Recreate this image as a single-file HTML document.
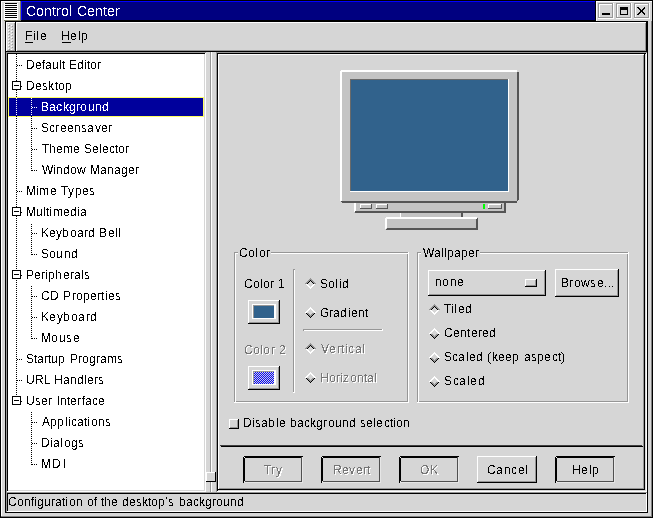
<!DOCTYPE html>
<html><head><meta charset="utf-8"><style>
html,body{margin:0;padding:0;width:653px;height:518px;overflow:hidden;background:#d6d6d6}
div{position:absolute}
.t{font-family:"Liberation Sans",sans-serif;white-space:nowrap;filter:url(#c)}
</style></head><body>
<svg width="0" height="0" style="position:absolute"><filter id="c"><feComponentTransfer><feFuncA type="discrete" tableValues="0 1"/></feComponentTransfer></filter></svg>
<div style="left:0px;top:0px;width:653px;height:518px;background:#d6d6d6;"></div>
<div style="left:0px;top:0px;width:653px;height:518px;background:transparent;box-sizing:border-box;border:1px solid #000"></div>
<div style="left:1px;top:1px;width:651px;height:1px;background:#ffffff;"></div>
<div style="left:1px;top:1px;width:1px;height:516px;background:#ffffff;"></div>
<div style="left:1px;top:516px;width:651px;height:1px;background:#808080;"></div>
<div style="left:651px;top:1px;width:1px;height:516px;background:#808080;"></div>
<div style="left:5px;top:21px;width:643px;height:492px;background:transparent;box-sizing:border-box;border:1px solid #000"></div>
<div style="left:2px;top:2px;width:18px;height:18px;background:#d6d6d6;"></div>
<div style="left:4px;top:3px;width:14px;height:17px;background:#ffffff;"></div>
<div style="left:5px;top:3px;width:12px;height:1px;background:#000000;"></div>
<div style="left:5px;top:5px;width:12px;height:1px;background:#000000;"></div>
<div style="left:5px;top:7px;width:12px;height:1px;background:#000000;"></div>
<div style="left:5px;top:9px;width:12px;height:1px;background:#000000;"></div>
<div style="left:5px;top:11px;width:12px;height:1px;background:#000000;"></div>
<div style="left:5px;top:13px;width:12px;height:1px;background:#000000;"></div>
<div style="left:5px;top:15px;width:12px;height:1px;background:#000000;"></div>
<div style="left:5px;top:17px;width:12px;height:1px;background:#000000;"></div>
<div style="left:20px;top:1px;width:1px;height:20px;background:#7c7c64;"></div>
<div style="left:4px;top:20px;width:17px;height:1px;background:#7c7c64;"></div>
<div style="left:21px;top:1px;width:574px;height:19px;background:#000080;"></div>
<div style="left:21px;top:1px;width:574px;height:1px;background:#0000ff;"></div>
<div style="left:21px;top:1px;width:1px;height:19px;background:#0000ff;"></div>
<div style="left:595px;top:1px;width:1px;height:20px;background:#000000;"></div>
<div style="left:21px;top:20px;width:575px;height:1px;background:#000000;"></div>
<div class="t" style="left:26px;top:4px;font-size:14px;line-height:14px;color:#ffffff;"><div style="left:0px;top:0">C</div><div style="left:10px;top:0">o</div><div style="left:18px;top:0">n</div><div style="left:26px;top:0">t</div><div style="left:30px;top:0">r</div><div style="left:35px;top:0">o</div><div style="left:43px;top:0">l</div><div style="left:51px;top:0">C</div><div style="left:61px;top:0">e</div><div style="left:69px;top:0">n</div><div style="left:77px;top:0">t</div><div style="left:81px;top:0">e</div><div style="left:89px;top:0">r</div></div>
<div style="left:596px;top:1px;width:56px;height:20px;background:#d6d6d6;"></div>
<div style="left:596px;top:1px;width:56px;height:1px;background:#ffffff;"></div>
<div style="left:596px;top:1px;width:1px;height:20px;background:#ffffff;"></div>
<div style="left:598px;top:3px;width:16px;height:16px;background:#d6d6d6;"></div>
<div style="left:598px;top:3px;width:16px;height:1px;background:#969696;"></div>
<div style="left:598px;top:3px;width:1px;height:16px;background:#969696;"></div>
<div style="left:598px;top:18px;width:16px;height:1px;background:#ffffff;"></div>
<div style="left:613px;top:3px;width:1px;height:16px;background:#ffffff;"></div>
<div style="left:599px;top:4px;width:14px;height:1px;background:#ffffff;"></div>
<div style="left:599px;top:4px;width:1px;height:14px;background:#ffffff;"></div>
<div style="left:599px;top:17px;width:14px;height:1px;background:#969696;"></div>
<div style="left:612px;top:4px;width:1px;height:14px;background:#969696;"></div>
<div style="left:616px;top:3px;width:16px;height:16px;background:#d6d6d6;"></div>
<div style="left:616px;top:3px;width:16px;height:1px;background:#969696;"></div>
<div style="left:616px;top:3px;width:1px;height:16px;background:#969696;"></div>
<div style="left:616px;top:18px;width:16px;height:1px;background:#ffffff;"></div>
<div style="left:631px;top:3px;width:1px;height:16px;background:#ffffff;"></div>
<div style="left:617px;top:4px;width:14px;height:1px;background:#ffffff;"></div>
<div style="left:617px;top:4px;width:1px;height:14px;background:#ffffff;"></div>
<div style="left:617px;top:17px;width:14px;height:1px;background:#969696;"></div>
<div style="left:630px;top:4px;width:1px;height:14px;background:#969696;"></div>
<div style="left:634px;top:3px;width:16px;height:16px;background:#d6d6d6;"></div>
<div style="left:634px;top:3px;width:16px;height:1px;background:#969696;"></div>
<div style="left:634px;top:3px;width:1px;height:16px;background:#969696;"></div>
<div style="left:634px;top:18px;width:16px;height:1px;background:#ffffff;"></div>
<div style="left:649px;top:3px;width:1px;height:16px;background:#ffffff;"></div>
<div style="left:635px;top:4px;width:14px;height:1px;background:#ffffff;"></div>
<div style="left:635px;top:4px;width:1px;height:14px;background:#ffffff;"></div>
<div style="left:635px;top:17px;width:14px;height:1px;background:#969696;"></div>
<div style="left:648px;top:4px;width:1px;height:14px;background:#969696;"></div>
<div style="left:602px;top:13px;width:8px;height:2px;background:#000000;"></div>
<div style="left:620px;top:7px;width:8px;height:8px;background:transparent;box-sizing:border-box;border:1px solid #000;border-top-width:3px"></div>
<div style="left:637px;top:7px;width:2px;height:1px;background:#000000;"></div>
<div style="left:637px;top:14px;width:2px;height:1px;background:#000000;"></div>
<div style="left:638px;top:8px;width:2px;height:1px;background:#000000;"></div>
<div style="left:638px;top:13px;width:2px;height:1px;background:#000000;"></div>
<div style="left:639px;top:9px;width:2px;height:1px;background:#000000;"></div>
<div style="left:639px;top:12px;width:2px;height:1px;background:#000000;"></div>
<div style="left:640px;top:10px;width:2px;height:1px;background:#000000;"></div>
<div style="left:640px;top:11px;width:2px;height:1px;background:#000000;"></div>
<div style="left:641px;top:11px;width:2px;height:1px;background:#000000;"></div>
<div style="left:641px;top:10px;width:2px;height:1px;background:#000000;"></div>
<div style="left:642px;top:12px;width:2px;height:1px;background:#000000;"></div>
<div style="left:642px;top:9px;width:2px;height:1px;background:#000000;"></div>
<div style="left:643px;top:13px;width:2px;height:1px;background:#000000;"></div>
<div style="left:643px;top:8px;width:2px;height:1px;background:#000000;"></div>
<div style="left:644px;top:14px;width:1px;height:1px;background:#000000;"></div>
<div style="left:644px;top:7px;width:1px;height:1px;background:#000000;"></div>
<div style="left:6px;top:22px;width:10px;height:1px;background:#ffffff;"></div>
<div style="left:6px;top:22px;width:1px;height:30px;background:#ffffff;"></div>
<div style="left:7px;top:50px;width:8px;height:1px;background:#969696;"></div>
<div style="left:14px;top:23px;width:1px;height:28px;background:#969696;"></div>
<div style="left:6px;top:51px;width:10px;height:1px;background:#000000;"></div>
<div style="left:15px;top:22px;width:1px;height:30px;background:#000000;"></div>
<div style="left:8px;top:24px;width:1px;height:1px;background:#ffffff;"></div>
<div style="left:9px;top:25px;width:1px;height:1px;background:#969696;"></div>
<div style="left:11px;top:25px;width:1px;height:1px;background:#ffffff;"></div>
<div style="left:12px;top:26px;width:1px;height:1px;background:#969696;"></div>
<div style="left:8px;top:27px;width:1px;height:1px;background:#ffffff;"></div>
<div style="left:9px;top:28px;width:1px;height:1px;background:#969696;"></div>
<div style="left:11px;top:28px;width:1px;height:1px;background:#ffffff;"></div>
<div style="left:12px;top:29px;width:1px;height:1px;background:#969696;"></div>
<div style="left:8px;top:30px;width:1px;height:1px;background:#ffffff;"></div>
<div style="left:9px;top:31px;width:1px;height:1px;background:#969696;"></div>
<div style="left:11px;top:31px;width:1px;height:1px;background:#ffffff;"></div>
<div style="left:12px;top:32px;width:1px;height:1px;background:#969696;"></div>
<div style="left:8px;top:33px;width:1px;height:1px;background:#ffffff;"></div>
<div style="left:9px;top:34px;width:1px;height:1px;background:#969696;"></div>
<div style="left:11px;top:34px;width:1px;height:1px;background:#ffffff;"></div>
<div style="left:12px;top:35px;width:1px;height:1px;background:#969696;"></div>
<div style="left:8px;top:36px;width:1px;height:1px;background:#ffffff;"></div>
<div style="left:9px;top:37px;width:1px;height:1px;background:#969696;"></div>
<div style="left:11px;top:37px;width:1px;height:1px;background:#ffffff;"></div>
<div style="left:12px;top:38px;width:1px;height:1px;background:#969696;"></div>
<div style="left:8px;top:39px;width:1px;height:1px;background:#ffffff;"></div>
<div style="left:9px;top:40px;width:1px;height:1px;background:#969696;"></div>
<div style="left:11px;top:40px;width:1px;height:1px;background:#ffffff;"></div>
<div style="left:12px;top:41px;width:1px;height:1px;background:#969696;"></div>
<div style="left:8px;top:42px;width:1px;height:1px;background:#ffffff;"></div>
<div style="left:9px;top:43px;width:1px;height:1px;background:#969696;"></div>
<div style="left:11px;top:43px;width:1px;height:1px;background:#ffffff;"></div>
<div style="left:12px;top:44px;width:1px;height:1px;background:#969696;"></div>
<div style="left:8px;top:45px;width:1px;height:1px;background:#ffffff;"></div>
<div style="left:9px;top:46px;width:1px;height:1px;background:#969696;"></div>
<div style="left:11px;top:46px;width:1px;height:1px;background:#ffffff;"></div>
<div style="left:12px;top:47px;width:1px;height:1px;background:#969696;"></div>
<div style="left:8px;top:48px;width:1px;height:1px;background:#ffffff;"></div>
<div style="left:9px;top:49px;width:1px;height:1px;background:#969696;"></div>
<div style="left:11px;top:49px;width:1px;height:1px;background:#ffffff;"></div>
<div style="left:12px;top:50px;width:1px;height:1px;background:#969696;"></div>
<div style="left:16px;top:22px;width:631px;height:1px;background:#ffffff;"></div>
<div style="left:16px;top:22px;width:1px;height:30px;background:#ffffff;"></div>
<div style="left:17px;top:50px;width:629px;height:1px;background:#969696;"></div>
<div style="left:645px;top:23px;width:1px;height:28px;background:#969696;"></div>
<div style="left:16px;top:51px;width:631px;height:1px;background:#000000;"></div>
<div style="left:646px;top:22px;width:1px;height:30px;background:#000000;"></div>
<div class="t" style="left:25px;top:30px;font-size:12px;line-height:12px;color:#000000;"><div style="left:0px;top:0">F</div><div style="left:8px;top:0">i</div><div style="left:11px;top:0">l</div><div style="left:15px;top:0">e</div></div>
<div style="left:25px;top:42px;width:8px;height:1px;background:#000000;"></div>
<div class="t" style="left:61px;top:30px;font-size:12px;line-height:12px;color:#000000;"><div style="left:0px;top:0">H</div><div style="left:9px;top:0">e</div><div style="left:17px;top:0">l</div><div style="left:20px;top:0">p</div></div>
<div style="left:62px;top:42px;width:9px;height:1px;background:#000000;"></div>
<div style="left:6px;top:491px;width:200px;height:1px;background:#ffffff;"></div>
<div style="left:205px;top:52px;width:1px;height:440px;background:#ffffff;"></div>
<div style="left:7px;top:490px;width:198px;height:1px;background:#d6d6d6;"></div>
<div style="left:204px;top:53px;width:1px;height:438px;background:#d6d6d6;"></div>
<div style="left:6px;top:52px;width:200px;height:1px;background:#969696;"></div>
<div style="left:6px;top:52px;width:1px;height:440px;background:#969696;"></div>
<div style="left:7px;top:53px;width:198px;height:1px;background:#000000;"></div>
<div style="left:7px;top:53px;width:1px;height:438px;background:#000000;"></div>
<div style="left:8px;top:54px;width:196px;height:436px;background:#ffffff;"></div>
<div style="left:8px;top:97px;width:196px;height:20px;background:#ffff63;"></div>
<div style="left:9px;top:98px;width:194px;height:18px;background:#00009c;"></div>
<div style="left:16px;top:54px;width:1px;height:44px;background:repeating-linear-gradient(to bottom,#000000 0 1px,transparent 1px 2px);"></div>
<div style="left:16px;top:98px;width:1px;height:18px;background:repeating-linear-gradient(to bottom,#ffffff 0 1px,transparent 1px 2px);"></div>
<div style="left:16px;top:116px;width:1px;height:280px;background:repeating-linear-gradient(to bottom,#000000 0 1px,transparent 1px 2px);"></div>
<div style="left:31px;top:98px;width:1px;height:18px;background:repeating-linear-gradient(to bottom,#ffffff 0 1px,transparent 1px 2px);"></div>
<div style="left:31px;top:116px;width:1px;height:55px;background:repeating-linear-gradient(to bottom,#000000 0 1px,transparent 1px 2px);"></div>
<div style="left:31px;top:224px;width:1px;height:31px;background:repeating-linear-gradient(to bottom,#000000 0 1px,transparent 1px 2px);"></div>
<div style="left:31px;top:286px;width:1px;height:53px;background:repeating-linear-gradient(to bottom,#000000 0 1px,transparent 1px 2px);"></div>
<div style="left:31px;top:412px;width:1px;height:53px;background:repeating-linear-gradient(to bottom,#000000 0 1px,transparent 1px 2px);"></div>
<div style="left:17px;top:65px;width:5px;height:1px;background:repeating-linear-gradient(to right,#000000 0 1px,transparent 1px 2px);"></div>
<div class="t" style="left:26px;top:59px;font-size:12px;line-height:12px;color:#000000;"><div style="left:0px;top:0">D</div><div style="left:9px;top:0">e</div><div style="left:16px;top:0">f</div><div style="left:19px;top:0">a</div><div style="left:26px;top:0">u</div><div style="left:33px;top:0">l</div><div style="left:36px;top:0">t</div><div style="left:43px;top:0">E</div><div style="left:51px;top:0">d</div><div style="left:58px;top:0">i</div><div style="left:61px;top:0">t</div><div style="left:64px;top:0">o</div><div style="left:71px;top:0">r</div></div>
<div style="left:12px;top:81px;width:9px;height:9px;background:#ffffff;box-sizing:border-box;border:1px solid #000"></div>
<div style="left:14px;top:85px;width:5px;height:1px;background:#000000;"></div>
<div style="left:21px;top:86px;width:1px;height:1px;background:#000000;"></div>
<div class="t" style="left:26px;top:80px;font-size:12px;line-height:12px;color:#000000;"><div style="left:0px;top:0">D</div><div style="left:9px;top:0">e</div><div style="left:16px;top:0">s</div><div style="left:22px;top:0">k</div><div style="left:29px;top:0">t</div><div style="left:32px;top:0">o</div><div style="left:39px;top:0">p</div></div>
<div style="left:32px;top:107px;width:5px;height:1px;background:repeating-linear-gradient(to right,#ffffff 0 1px,transparent 1px 2px);"></div>
<div class="t" style="left:41px;top:101px;font-size:12px;line-height:12px;color:#ffffff;"><div style="left:0px;top:0">B</div><div style="left:8px;top:0">a</div><div style="left:15px;top:0">c</div><div style="left:22px;top:0">k</div><div style="left:28px;top:0">g</div><div style="left:35px;top:0">r</div><div style="left:39px;top:0">o</div><div style="left:47px;top:0">u</div><div style="left:54px;top:0">n</div><div style="left:61px;top:0">d</div></div>
<div style="left:32px;top:128px;width:5px;height:1px;background:repeating-linear-gradient(to right,#000000 0 1px,transparent 1px 2px);"></div>
<div class="t" style="left:41px;top:122px;font-size:12px;line-height:12px;color:#000000;"><div style="left:0px;top:0">S</div><div style="left:8px;top:0">c</div><div style="left:14px;top:0">r</div><div style="left:19px;top:0">e</div><div style="left:26px;top:0">e</div><div style="left:33px;top:0">n</div><div style="left:40px;top:0">s</div><div style="left:46px;top:0">a</div><div style="left:54px;top:0">v</div><div style="left:60px;top:0">e</div><div style="left:67px;top:0">r</div></div>
<div style="left:32px;top:149px;width:5px;height:1px;background:repeating-linear-gradient(to right,#000000 0 1px,transparent 1px 2px);"></div>
<div class="t" style="left:42px;top:143px;font-size:12px;line-height:12px;color:#000000;"><div style="left:0px;top:0">T</div><div style="left:7px;top:0">h</div><div style="left:14px;top:0">e</div><div style="left:21px;top:0">m</div><div style="left:31px;top:0">e</div><div style="left:42px;top:0">S</div><div style="left:50px;top:0">e</div><div style="left:57px;top:0">l</div><div style="left:60px;top:0">e</div><div style="left:67px;top:0">c</div><div style="left:73px;top:0">t</div><div style="left:76px;top:0">o</div><div style="left:83px;top:0">r</div></div>
<div style="left:32px;top:170px;width:5px;height:1px;background:repeating-linear-gradient(to right,#000000 0 1px,transparent 1px 2px);"></div>
<div class="t" style="left:42px;top:164px;font-size:12px;line-height:12px;color:#000000;"><div style="left:0px;top:0">W</div><div style="left:11px;top:0">i</div><div style="left:14px;top:0">n</div><div style="left:21px;top:0">d</div><div style="left:28px;top:0">o</div><div style="left:35px;top:0">w</div><div style="left:48px;top:0">M</div><div style="left:58px;top:0">a</div><div style="left:65px;top:0">n</div><div style="left:72px;top:0">a</div><div style="left:79px;top:0">g</div><div style="left:86px;top:0">e</div><div style="left:93px;top:0">r</div></div>
<div style="left:17px;top:191px;width:5px;height:1px;background:repeating-linear-gradient(to right,#000000 0 1px,transparent 1px 2px);"></div>
<div class="t" style="left:26px;top:185px;font-size:12px;line-height:12px;color:#000000;"><div style="left:0px;top:0">M</div><div style="left:10px;top:0">i</div><div style="left:13px;top:0">m</div><div style="left:24px;top:0">e</div><div style="left:35px;top:0">T</div><div style="left:42px;top:0">y</div><div style="left:49px;top:0">p</div><div style="left:56px;top:0">e</div><div style="left:63px;top:0">s</div></div>
<div style="left:12px;top:207px;width:9px;height:9px;background:#ffffff;box-sizing:border-box;border:1px solid #000"></div>
<div style="left:14px;top:211px;width:5px;height:1px;background:#000000;"></div>
<div style="left:21px;top:212px;width:1px;height:1px;background:#000000;"></div>
<div class="t" style="left:26px;top:206px;font-size:12px;line-height:12px;color:#000000;"><div style="left:0px;top:0">M</div><div style="left:10px;top:0">u</div><div style="left:17px;top:0">l</div><div style="left:20px;top:0">t</div><div style="left:23px;top:0">i</div><div style="left:27px;top:0">m</div><div style="left:37px;top:0">e</div><div style="left:44px;top:0">d</div><div style="left:51px;top:0">i</div><div style="left:54px;top:0">a</div></div>
<div style="left:32px;top:233px;width:5px;height:1px;background:repeating-linear-gradient(to right,#000000 0 1px,transparent 1px 2px);"></div>
<div class="t" style="left:41px;top:227px;font-size:12px;line-height:12px;color:#000000;"><div style="left:0px;top:0">K</div><div style="left:8px;top:0">e</div><div style="left:15px;top:0">y</div><div style="left:21px;top:0">b</div><div style="left:29px;top:0">o</div><div style="left:36px;top:0">a</div><div style="left:43px;top:0">r</div><div style="left:47px;top:0">d</div><div style="left:58px;top:0">B</div><div style="left:67px;top:0">e</div><div style="left:74px;top:0">l</div><div style="left:77px;top:0">l</div></div>
<div style="left:32px;top:254px;width:5px;height:1px;background:repeating-linear-gradient(to right,#000000 0 1px,transparent 1px 2px);"></div>
<div class="t" style="left:41px;top:248px;font-size:12px;line-height:12px;color:#000000;"><div style="left:0px;top:0">S</div><div style="left:8px;top:0">o</div><div style="left:15px;top:0">u</div><div style="left:23px;top:0">n</div><div style="left:30px;top:0">d</div></div>
<div style="left:12px;top:270px;width:9px;height:9px;background:#ffffff;box-sizing:border-box;border:1px solid #000"></div>
<div style="left:14px;top:274px;width:5px;height:1px;background:#000000;"></div>
<div style="left:21px;top:275px;width:1px;height:1px;background:#000000;"></div>
<div class="t" style="left:26px;top:269px;font-size:12px;line-height:12px;color:#000000;"><div style="left:0px;top:0">P</div><div style="left:8px;top:0">e</div><div style="left:15px;top:0">r</div><div style="left:19px;top:0">i</div><div style="left:22px;top:0">p</div><div style="left:29px;top:0">h</div><div style="left:37px;top:0">e</div><div style="left:44px;top:0">r</div><div style="left:48px;top:0">a</div><div style="left:55px;top:0">l</div><div style="left:58px;top:0">s</div></div>
<div style="left:32px;top:296px;width:5px;height:1px;background:repeating-linear-gradient(to right,#000000 0 1px,transparent 1px 2px);"></div>
<div class="t" style="left:41px;top:290px;font-size:12px;line-height:12px;color:#000000;"><div style="left:0px;top:0">C</div><div style="left:9px;top:0">D</div><div style="left:22px;top:0">P</div><div style="left:31px;top:0">r</div><div style="left:35px;top:0">o</div><div style="left:42px;top:0">p</div><div style="left:49px;top:0">e</div><div style="left:56px;top:0">r</div><div style="left:60px;top:0">t</div><div style="left:64px;top:0">i</div><div style="left:67px;top:0">e</div><div style="left:74px;top:0">s</div></div>
<div style="left:32px;top:317px;width:5px;height:1px;background:repeating-linear-gradient(to right,#000000 0 1px,transparent 1px 2px);"></div>
<div class="t" style="left:41px;top:311px;font-size:12px;line-height:12px;color:#000000;"><div style="left:0px;top:0">K</div><div style="left:8px;top:0">e</div><div style="left:16px;top:0">y</div><div style="left:22px;top:0">b</div><div style="left:30px;top:0">o</div><div style="left:37px;top:0">a</div><div style="left:45px;top:0">r</div><div style="left:49px;top:0">d</div></div>
<div style="left:32px;top:338px;width:5px;height:1px;background:repeating-linear-gradient(to right,#000000 0 1px,transparent 1px 2px);"></div>
<div class="t" style="left:41px;top:332px;font-size:12px;line-height:12px;color:#000000;"><div style="left:0px;top:0">M</div><div style="left:10px;top:0">o</div><div style="left:18px;top:0">u</div><div style="left:25px;top:0">s</div><div style="left:32px;top:0">e</div></div>
<div style="left:17px;top:359px;width:5px;height:1px;background:repeating-linear-gradient(to right,#000000 0 1px,transparent 1px 2px);"></div>
<div class="t" style="left:26px;top:353px;font-size:12px;line-height:12px;color:#000000;"><div style="left:0px;top:0">S</div><div style="left:8px;top:0">t</div><div style="left:11px;top:0">a</div><div style="left:18px;top:0">r</div><div style="left:22px;top:0">t</div><div style="left:25px;top:0">u</div><div style="left:32px;top:0">p</div><div style="left:44px;top:0">P</div><div style="left:52px;top:0">r</div><div style="left:56px;top:0">o</div><div style="left:63px;top:0">g</div><div style="left:70px;top:0">r</div><div style="left:74px;top:0">a</div><div style="left:81px;top:0">m</div><div style="left:91px;top:0">s</div></div>
<div style="left:17px;top:380px;width:5px;height:1px;background:repeating-linear-gradient(to right,#000000 0 1px,transparent 1px 2px);"></div>
<div class="t" style="left:26px;top:374px;font-size:12px;line-height:12px;color:#000000;"><div style="left:0px;top:0">U</div><div style="left:9px;top:0">R</div><div style="left:18px;top:0">L</div><div style="left:28px;top:0">H</div><div style="left:37px;top:0">a</div><div style="left:44px;top:0">n</div><div style="left:51px;top:0">d</div><div style="left:58px;top:0">l</div><div style="left:61px;top:0">e</div><div style="left:68px;top:0">r</div><div style="left:72px;top:0">s</div></div>
<div style="left:12px;top:396px;width:9px;height:9px;background:#ffffff;box-sizing:border-box;border:1px solid #000"></div>
<div style="left:14px;top:400px;width:5px;height:1px;background:#000000;"></div>
<div style="left:21px;top:401px;width:1px;height:1px;background:#000000;"></div>
<div class="t" style="left:26px;top:395px;font-size:12px;line-height:12px;color:#000000;"><div style="left:0px;top:0">U</div><div style="left:9px;top:0">s</div><div style="left:15px;top:0">e</div><div style="left:22px;top:0">r</div><div style="left:31px;top:0">I</div><div style="left:34px;top:0">n</div><div style="left:41px;top:0">t</div><div style="left:44px;top:0">e</div><div style="left:51px;top:0">r</div><div style="left:56px;top:0">f</div><div style="left:59px;top:0">a</div><div style="left:66px;top:0">c</div><div style="left:72px;top:0">e</div></div>
<div style="left:32px;top:422px;width:5px;height:1px;background:repeating-linear-gradient(to right,#000000 0 1px,transparent 1px 2px);"></div>
<div class="t" style="left:42px;top:416px;font-size:12px;line-height:12px;color:#000000;"><div style="left:0px;top:0">A</div><div style="left:8px;top:0">p</div><div style="left:15px;top:0">p</div><div style="left:23px;top:0">l</div><div style="left:26px;top:0">i</div><div style="left:29px;top:0">c</div><div style="left:35px;top:0">a</div><div style="left:42px;top:0">t</div><div style="left:45px;top:0">i</div><div style="left:49px;top:0">o</div><div style="left:56px;top:0">n</div><div style="left:63px;top:0">s</div></div>
<div style="left:32px;top:443px;width:5px;height:1px;background:repeating-linear-gradient(to right,#000000 0 1px,transparent 1px 2px);"></div>
<div class="t" style="left:41px;top:437px;font-size:12px;line-height:12px;color:#000000;"><div style="left:0px;top:0">D</div><div style="left:9px;top:0">i</div><div style="left:12px;top:0">a</div><div style="left:19px;top:0">l</div><div style="left:23px;top:0">o</div><div style="left:30px;top:0">g</div><div style="left:37px;top:0">s</div></div>
<div style="left:32px;top:464px;width:5px;height:1px;background:repeating-linear-gradient(to right,#000000 0 1px,transparent 1px 2px);"></div>
<div class="t" style="left:41px;top:458px;font-size:12px;line-height:12px;color:#000000;"><div style="left:0px;top:0">M</div><div style="left:11px;top:0">D</div><div style="left:22px;top:0">I</div></div>
<div style="left:210px;top:52px;width:1px;height:440px;background:#969696;"></div>
<div style="left:211px;top:52px;width:1px;height:440px;background:#ffffff;"></div>
<div style="left:206px;top:472px;width:10px;height:10px;background:#d6d6d6;"></div>
<div style="left:206px;top:472px;width:10px;height:1px;background:#ffffff;"></div>
<div style="left:206px;top:472px;width:1px;height:10px;background:#ffffff;"></div>
<div style="left:206px;top:481px;width:10px;height:1px;background:#000000;"></div>
<div style="left:215px;top:472px;width:1px;height:10px;background:#000000;"></div>
<div style="left:216px;top:491px;width:431px;height:1px;background:#ffffff;"></div>
<div style="left:646px;top:52px;width:1px;height:440px;background:#ffffff;"></div>
<div style="left:217px;top:490px;width:429px;height:1px;background:#d6d6d6;"></div>
<div style="left:645px;top:53px;width:1px;height:438px;background:#d6d6d6;"></div>
<div style="left:216px;top:52px;width:431px;height:1px;background:#969696;"></div>
<div style="left:216px;top:52px;width:1px;height:440px;background:#969696;"></div>
<div style="left:217px;top:53px;width:429px;height:1px;background:#000000;"></div>
<div style="left:217px;top:53px;width:1px;height:438px;background:#000000;"></div>
<div style="left:218px;top:54px;width:427px;height:1px;background:#ffffff;"></div>
<div style="left:218px;top:54px;width:1px;height:436px;background:#ffffff;"></div>
<div style="left:219px;top:488px;width:425px;height:1px;background:#969696;"></div>
<div style="left:643px;top:55px;width:1px;height:434px;background:#969696;"></div>
<div style="left:218px;top:489px;width:427px;height:1px;background:#000000;"></div>
<div style="left:644px;top:54px;width:1px;height:436px;background:#000000;"></div>
<div style="left:220px;top:445px;width:422px;height:1px;background:#404040;"></div>
<div style="left:221px;top:446px;width:422px;height:1px;background:#000000;"></div>
<div style="left:342px;top:72px;width:175px;height:129px;background:#c4c4c4;"></div>
<div style="left:341px;top:70px;width:176px;height:1px;background:#ffffff;"></div>
<div style="left:340px;top:71px;width:177px;height:1px;background:#ffffff;"></div>
<div style="left:340px;top:71px;width:1px;height:130px;background:#ffffff;"></div>
<div style="left:341px;top:70px;width:1px;height:131px;background:#ffffff;"></div>
<div style="left:517px;top:72px;width:1px;height:129px;background:#555555;"></div>
<div style="left:518px;top:72px;width:1px;height:128px;background:#555555;"></div>
<div style="left:341px;top:201px;width:176px;height:1px;background:#555555;"></div>
<div style="left:342px;top:202px;width:175px;height:1px;background:#555555;"></div>
<div style="left:350px;top:79px;width:159px;height:113px;background:#ffffff;"></div>
<div style="left:350px;top:79px;width:158px;height:112px;background:#6a6a6a;"></div>
<div style="left:351px;top:80px;width:157px;height:111px;background:#31628c;"></div>
<div style="left:354px;top:203px;width:152px;height:10px;background:#c4c4c4;"></div>
<div style="left:354px;top:203px;width:1px;height:9px;background:#ffffff;"></div>
<div style="left:355px;top:203px;width:1px;height:8px;background:#ffffff;"></div>
<div style="left:504px;top:203px;width:1px;height:10px;background:#555555;"></div>
<div style="left:505px;top:203px;width:1px;height:10px;background:#555555;"></div>
<div style="left:355px;top:211px;width:151px;height:1px;background:#555555;"></div>
<div style="left:355px;top:212px;width:151px;height:1px;background:#555555;"></div>
<div style="left:360px;top:204px;width:12px;height:1px;background:#ffffff;"></div>
<div style="left:360px;top:204px;width:1px;height:5px;background:#ffffff;"></div>
<div style="left:360px;top:208px;width:12px;height:1px;background:#555555;"></div>
<div style="left:371px;top:204px;width:1px;height:5px;background:#555555;"></div>
<div style="left:376px;top:204px;width:12px;height:1px;background:#ffffff;"></div>
<div style="left:376px;top:204px;width:1px;height:5px;background:#ffffff;"></div>
<div style="left:376px;top:208px;width:12px;height:1px;background:#555555;"></div>
<div style="left:387px;top:204px;width:1px;height:5px;background:#555555;"></div>
<div style="left:488px;top:204px;width:14px;height:1px;background:#ffffff;"></div>
<div style="left:488px;top:204px;width:1px;height:5px;background:#ffffff;"></div>
<div style="left:488px;top:208px;width:14px;height:1px;background:#555555;"></div>
<div style="left:501px;top:204px;width:1px;height:5px;background:#555555;"></div>
<div style="left:483px;top:204px;width:2px;height:5px;background:#00ff00;"></div>
<div style="left:400px;top:213px;width:63px;height:4px;background:#c4c4c4;"></div>
<div style="left:400px;top:213px;width:1px;height:4px;background:#ffffff;"></div>
<div style="left:461px;top:213px;width:1px;height:4px;background:#555555;"></div>
<div style="left:462px;top:213px;width:1px;height:4px;background:#555555;"></div>
<div style="left:387px;top:219px;width:89px;height:9px;background:#c4c4c4;"></div>
<div style="left:386px;top:217px;width:91px;height:1px;background:#ffffff;"></div>
<div style="left:385px;top:218px;width:92px;height:1px;background:#ffffff;"></div>
<div style="left:385px;top:218px;width:1px;height:11px;background:#ffffff;"></div>
<div style="left:386px;top:217px;width:1px;height:11px;background:#ffffff;"></div>
<div style="left:477px;top:218px;width:1px;height:12px;background:#555555;"></div>
<div style="left:476px;top:219px;width:1px;height:11px;background:#555555;"></div>
<div style="left:387px;top:228px;width:91px;height:1px;background:#555555;"></div>
<div style="left:386px;top:229px;width:92px;height:1px;background:#555555;"></div>
<div style="left:234px;top:252px;width:174px;height:1px;background:#969696;"></div>
<div style="left:234px;top:252px;width:1px;height:150px;background:#969696;"></div>
<div style="left:235px;top:253px;width:174px;height:1px;background:#ffffff;"></div>
<div style="left:235px;top:253px;width:1px;height:149px;background:#ffffff;"></div>
<div style="left:407px;top:254px;width:1px;height:148px;background:#969696;"></div>
<div style="left:236px;top:401px;width:172px;height:1px;background:#969696;"></div>
<div style="left:408px;top:252px;width:1px;height:151px;background:#ffffff;"></div>
<div style="left:234px;top:402px;width:175px;height:1px;background:#ffffff;"></div>
<div style="left:238px;top:246px;width:33px;height:10px;background:#d6d6d6;"></div>
<div class="t" style="left:239px;top:247px;font-size:12px;line-height:12px;color:#000000;"><div style="left:0px;top:0">C</div><div style="left:9px;top:0">o</div><div style="left:16px;top:0">l</div><div style="left:20px;top:0">o</div><div style="left:27px;top:0">r</div></div>
<div class="t" style="left:244px;top:278px;font-size:12px;line-height:12px;color:#000000;"><div style="left:0px;top:0">C</div><div style="left:9px;top:0">o</div><div style="left:16px;top:0">l</div><div style="left:19px;top:0">o</div><div style="left:26px;top:0">r</div><div style="left:34px;top:0">1</div></div>
<div style="left:248px;top:300px;width:32px;height:1px;background:#ffffff;"></div>
<div style="left:248px;top:300px;width:1px;height:24px;background:#ffffff;"></div>
<div style="left:249px;top:322px;width:30px;height:1px;background:#969696;"></div>
<div style="left:278px;top:301px;width:1px;height:22px;background:#969696;"></div>
<div style="left:248px;top:323px;width:32px;height:1px;background:#000000;"></div>
<div style="left:279px;top:300px;width:1px;height:24px;background:#000000;"></div>
<div style="left:252px;top:304px;width:24px;height:15px;background:#ffffff;"></div>
<div style="left:253px;top:305px;width:21px;height:13px;background:#969696;"></div>
<div style="left:254px;top:306px;width:20px;height:12px;background:#31628c;"></div>
<div class="t" style="left:245px;top:345px;font-size:12px;line-height:12px;color:#ffffff;"><div style="left:0px;top:0">C</div><div style="left:9px;top:0">o</div><div style="left:16px;top:0">l</div><div style="left:19px;top:0">o</div><div style="left:27px;top:0">r</div><div style="left:35px;top:0">2</div></div>
<div class="t" style="left:244px;top:344px;font-size:12px;line-height:12px;color:#757575;"><div style="left:0px;top:0">C</div><div style="left:9px;top:0">o</div><div style="left:16px;top:0">l</div><div style="left:19px;top:0">o</div><div style="left:27px;top:0">r</div><div style="left:35px;top:0">2</div></div>
<div style="left:248px;top:366px;width:32px;height:1px;background:#ffffff;"></div>
<div style="left:248px;top:366px;width:1px;height:24px;background:#ffffff;"></div>
<div style="left:249px;top:388px;width:30px;height:1px;background:#969696;"></div>
<div style="left:278px;top:367px;width:1px;height:22px;background:#969696;"></div>
<div style="left:248px;top:389px;width:32px;height:1px;background:#000000;"></div>
<div style="left:279px;top:366px;width:1px;height:24px;background:#000000;"></div>
<div style="left:252px;top:370px;width:24px;height:15px;background:#ffffff;"></div>
<div style="left:253px;top:371px;width:21px;height:13px;background:#969696;"></div>
<div style="left:254px;top:372px;width:20px;height:12px;background:repeating-conic-gradient(#0000ff 0 25%, #d6d6d6 0 50%) 0 0/2px 2px;"></div>
<div style="left:293px;top:269px;width:1px;height:123px;background:#969696;"></div>
<div style="left:293px;top:392px;width:1px;height:1px;background:#ffffff;"></div>
<div style="left:294px;top:269px;width:1px;height:1px;background:#969696;"></div>
<div style="left:294px;top:270px;width:1px;height:123px;background:#ffffff;"></div>
<svg style="position:absolute;left:305px;top:278px" width="11" height="11" shape-rendering="crispEdges"><rect x="2" y="5" width="1" height="1" fill="#000000"/><rect x="3" y="6" width="1" height="1" fill="#d6d6d6"/><rect x="4" y="7" width="1" height="1" fill="#d6d6d6"/><rect x="5" y="8" width="1" height="1" fill="#d6d6d6"/><rect x="6" y="7" width="1" height="1" fill="#d6d6d6"/><rect x="7" y="6" width="1" height="1" fill="#d6d6d6"/><rect x="8" y="5" width="1" height="1" fill="#000000"/><rect x="1" y="5" width="1" height="1" fill="#969696"/><rect x="2" y="6" width="1" height="1" fill="#ffffff"/><rect x="3" y="7" width="1" height="1" fill="#ffffff"/><rect x="4" y="8" width="1" height="1" fill="#ffffff"/><rect x="5" y="9" width="1" height="1" fill="#ffffff"/><rect x="6" y="8" width="1" height="1" fill="#ffffff"/><rect x="7" y="7" width="1" height="1" fill="#ffffff"/><rect x="8" y="6" width="1" height="1" fill="#ffffff"/><rect x="9" y="5" width="1" height="1" fill="#969696"/><rect x="0" y="5" width="1" height="1" fill="#969696"/><rect x="1" y="6" width="1" height="1" fill="#ffffff"/><rect x="2" y="7" width="1" height="1" fill="#ffffff"/><rect x="3" y="8" width="1" height="1" fill="#ffffff"/><rect x="4" y="9" width="1" height="1" fill="#ffffff"/><rect x="5" y="10" width="1" height="1" fill="#ffffff"/><rect x="6" y="9" width="1" height="1" fill="#ffffff"/><rect x="7" y="8" width="1" height="1" fill="#ffffff"/><rect x="8" y="7" width="1" height="1" fill="#ffffff"/><rect x="9" y="6" width="1" height="1" fill="#ffffff"/><rect x="10" y="5" width="1" height="1" fill="#969696"/><rect x="3" y="4" width="1" height="1" fill="#000000"/><rect x="4" y="3" width="1" height="1" fill="#000000"/><rect x="5" y="2" width="1" height="1" fill="#000000"/><rect x="6" y="3" width="1" height="1" fill="#000000"/><rect x="7" y="4" width="1" height="1" fill="#000000"/><rect x="2" y="4" width="1" height="1" fill="#969696"/><rect x="3" y="3" width="1" height="1" fill="#969696"/><rect x="4" y="2" width="1" height="1" fill="#969696"/><rect x="5" y="1" width="1" height="1" fill="#969696"/><rect x="6" y="2" width="1" height="1" fill="#969696"/><rect x="7" y="3" width="1" height="1" fill="#969696"/><rect x="8" y="4" width="1" height="1" fill="#969696"/><rect x="1" y="4" width="1" height="1" fill="#969696"/><rect x="2" y="3" width="1" height="1" fill="#969696"/><rect x="3" y="2" width="1" height="1" fill="#969696"/><rect x="4" y="1" width="1" height="1" fill="#969696"/><rect x="5" y="0" width="1" height="1" fill="#969696"/><rect x="6" y="1" width="1" height="1" fill="#969696"/><rect x="7" y="2" width="1" height="1" fill="#969696"/><rect x="8" y="3" width="1" height="1" fill="#969696"/><rect x="9" y="4" width="1" height="1" fill="#969696"/></svg>
<div class="t" style="left:320px;top:278px;font-size:12px;line-height:12px;color:#000000;"><div style="left:0px;top:0">S</div><div style="left:8px;top:0">o</div><div style="left:15px;top:0">l</div><div style="left:19px;top:0">i</div><div style="left:22px;top:0">d</div></div>
<svg style="position:absolute;left:305px;top:307px" width="11" height="11" shape-rendering="crispEdges"><rect x="2" y="5" width="1" height="1" fill="#d6d6d6"/><rect x="3" y="6" width="1" height="1" fill="#969696"/><rect x="4" y="7" width="1" height="1" fill="#969696"/><rect x="5" y="8" width="1" height="1" fill="#969696"/><rect x="6" y="7" width="1" height="1" fill="#969696"/><rect x="7" y="6" width="1" height="1" fill="#969696"/><rect x="8" y="5" width="1" height="1" fill="#d6d6d6"/><rect x="1" y="5" width="1" height="1" fill="#ffffff"/><rect x="2" y="6" width="1" height="1" fill="#969696"/><rect x="3" y="7" width="1" height="1" fill="#969696"/><rect x="4" y="8" width="1" height="1" fill="#969696"/><rect x="5" y="9" width="1" height="1" fill="#969696"/><rect x="6" y="8" width="1" height="1" fill="#969696"/><rect x="7" y="7" width="1" height="1" fill="#969696"/><rect x="8" y="6" width="1" height="1" fill="#969696"/><rect x="9" y="5" width="1" height="1" fill="#ffffff"/><rect x="0" y="5" width="1" height="1" fill="#ffffff"/><rect x="1" y="6" width="1" height="1" fill="#000000"/><rect x="2" y="7" width="1" height="1" fill="#000000"/><rect x="3" y="8" width="1" height="1" fill="#000000"/><rect x="4" y="9" width="1" height="1" fill="#000000"/><rect x="5" y="10" width="1" height="1" fill="#000000"/><rect x="6" y="9" width="1" height="1" fill="#000000"/><rect x="7" y="8" width="1" height="1" fill="#000000"/><rect x="8" y="7" width="1" height="1" fill="#000000"/><rect x="9" y="6" width="1" height="1" fill="#000000"/><rect x="10" y="5" width="1" height="1" fill="#ffffff"/><rect x="3" y="4" width="1" height="1" fill="#d6d6d6"/><rect x="4" y="3" width="1" height="1" fill="#d6d6d6"/><rect x="5" y="2" width="1" height="1" fill="#d6d6d6"/><rect x="6" y="3" width="1" height="1" fill="#d6d6d6"/><rect x="7" y="4" width="1" height="1" fill="#d6d6d6"/><rect x="2" y="4" width="1" height="1" fill="#ffffff"/><rect x="3" y="3" width="1" height="1" fill="#ffffff"/><rect x="4" y="2" width="1" height="1" fill="#ffffff"/><rect x="5" y="1" width="1" height="1" fill="#ffffff"/><rect x="6" y="2" width="1" height="1" fill="#ffffff"/><rect x="7" y="3" width="1" height="1" fill="#ffffff"/><rect x="8" y="4" width="1" height="1" fill="#ffffff"/><rect x="1" y="4" width="1" height="1" fill="#ffffff"/><rect x="2" y="3" width="1" height="1" fill="#ffffff"/><rect x="3" y="2" width="1" height="1" fill="#ffffff"/><rect x="4" y="1" width="1" height="1" fill="#ffffff"/><rect x="5" y="0" width="1" height="1" fill="#ffffff"/><rect x="6" y="1" width="1" height="1" fill="#ffffff"/><rect x="7" y="2" width="1" height="1" fill="#ffffff"/><rect x="8" y="3" width="1" height="1" fill="#ffffff"/><rect x="9" y="4" width="1" height="1" fill="#ffffff"/></svg>
<div class="t" style="left:320px;top:307px;font-size:12px;line-height:12px;color:#000000;"><div style="left:0px;top:0">G</div><div style="left:9px;top:0">r</div><div style="left:13px;top:0">a</div><div style="left:20px;top:0">d</div><div style="left:28px;top:0">i</div><div style="left:31px;top:0">e</div><div style="left:38px;top:0">n</div><div style="left:45px;top:0">t</div></div>
<div style="left:303px;top:329px;width:79px;height:1px;background:#969696;"></div>
<div style="left:382px;top:329px;width:1px;height:1px;background:#ffffff;"></div>
<div style="left:303px;top:330px;width:1px;height:1px;background:#969696;"></div>
<div style="left:304px;top:330px;width:79px;height:1px;background:#ffffff;"></div>
<svg style="position:absolute;left:305px;top:343px" width="11" height="11" shape-rendering="crispEdges"><rect x="2" y="5" width="1" height="1" fill="#000000"/><rect x="3" y="6" width="1" height="1" fill="#d6d6d6"/><rect x="4" y="7" width="1" height="1" fill="#d6d6d6"/><rect x="5" y="8" width="1" height="1" fill="#d6d6d6"/><rect x="6" y="7" width="1" height="1" fill="#d6d6d6"/><rect x="7" y="6" width="1" height="1" fill="#d6d6d6"/><rect x="8" y="5" width="1" height="1" fill="#000000"/><rect x="1" y="5" width="1" height="1" fill="#969696"/><rect x="2" y="6" width="1" height="1" fill="#ffffff"/><rect x="3" y="7" width="1" height="1" fill="#ffffff"/><rect x="4" y="8" width="1" height="1" fill="#ffffff"/><rect x="5" y="9" width="1" height="1" fill="#ffffff"/><rect x="6" y="8" width="1" height="1" fill="#ffffff"/><rect x="7" y="7" width="1" height="1" fill="#ffffff"/><rect x="8" y="6" width="1" height="1" fill="#ffffff"/><rect x="9" y="5" width="1" height="1" fill="#969696"/><rect x="0" y="5" width="1" height="1" fill="#969696"/><rect x="1" y="6" width="1" height="1" fill="#ffffff"/><rect x="2" y="7" width="1" height="1" fill="#ffffff"/><rect x="3" y="8" width="1" height="1" fill="#ffffff"/><rect x="4" y="9" width="1" height="1" fill="#ffffff"/><rect x="5" y="10" width="1" height="1" fill="#ffffff"/><rect x="6" y="9" width="1" height="1" fill="#ffffff"/><rect x="7" y="8" width="1" height="1" fill="#ffffff"/><rect x="8" y="7" width="1" height="1" fill="#ffffff"/><rect x="9" y="6" width="1" height="1" fill="#ffffff"/><rect x="10" y="5" width="1" height="1" fill="#969696"/><rect x="3" y="4" width="1" height="1" fill="#000000"/><rect x="4" y="3" width="1" height="1" fill="#000000"/><rect x="5" y="2" width="1" height="1" fill="#000000"/><rect x="6" y="3" width="1" height="1" fill="#000000"/><rect x="7" y="4" width="1" height="1" fill="#000000"/><rect x="2" y="4" width="1" height="1" fill="#969696"/><rect x="3" y="3" width="1" height="1" fill="#969696"/><rect x="4" y="2" width="1" height="1" fill="#969696"/><rect x="5" y="1" width="1" height="1" fill="#969696"/><rect x="6" y="2" width="1" height="1" fill="#969696"/><rect x="7" y="3" width="1" height="1" fill="#969696"/><rect x="8" y="4" width="1" height="1" fill="#969696"/><rect x="1" y="4" width="1" height="1" fill="#969696"/><rect x="2" y="3" width="1" height="1" fill="#969696"/><rect x="3" y="2" width="1" height="1" fill="#969696"/><rect x="4" y="1" width="1" height="1" fill="#969696"/><rect x="5" y="0" width="1" height="1" fill="#969696"/><rect x="6" y="1" width="1" height="1" fill="#969696"/><rect x="7" y="2" width="1" height="1" fill="#969696"/><rect x="8" y="3" width="1" height="1" fill="#969696"/><rect x="9" y="4" width="1" height="1" fill="#969696"/></svg>
<div class="t" style="left:322px;top:344px;font-size:12px;line-height:12px;color:#ffffff;"><div style="left:0px;top:0">V</div><div style="left:8px;top:0">e</div><div style="left:16px;top:0">r</div><div style="left:20px;top:0">t</div><div style="left:24px;top:0">i</div><div style="left:27px;top:0">c</div><div style="left:34px;top:0">a</div><div style="left:41px;top:0">l</div></div>
<div class="t" style="left:321px;top:343px;font-size:12px;line-height:12px;color:#757575;"><div style="left:0px;top:0">V</div><div style="left:8px;top:0">e</div><div style="left:16px;top:0">r</div><div style="left:20px;top:0">t</div><div style="left:24px;top:0">i</div><div style="left:27px;top:0">c</div><div style="left:34px;top:0">a</div><div style="left:41px;top:0">l</div></div>
<svg style="position:absolute;left:305px;top:372px" width="11" height="11" shape-rendering="crispEdges"><rect x="2" y="5" width="1" height="1" fill="#d6d6d6"/><rect x="3" y="6" width="1" height="1" fill="#969696"/><rect x="4" y="7" width="1" height="1" fill="#969696"/><rect x="5" y="8" width="1" height="1" fill="#969696"/><rect x="6" y="7" width="1" height="1" fill="#969696"/><rect x="7" y="6" width="1" height="1" fill="#969696"/><rect x="8" y="5" width="1" height="1" fill="#d6d6d6"/><rect x="1" y="5" width="1" height="1" fill="#ffffff"/><rect x="2" y="6" width="1" height="1" fill="#969696"/><rect x="3" y="7" width="1" height="1" fill="#969696"/><rect x="4" y="8" width="1" height="1" fill="#969696"/><rect x="5" y="9" width="1" height="1" fill="#969696"/><rect x="6" y="8" width="1" height="1" fill="#969696"/><rect x="7" y="7" width="1" height="1" fill="#969696"/><rect x="8" y="6" width="1" height="1" fill="#969696"/><rect x="9" y="5" width="1" height="1" fill="#ffffff"/><rect x="0" y="5" width="1" height="1" fill="#ffffff"/><rect x="1" y="6" width="1" height="1" fill="#000000"/><rect x="2" y="7" width="1" height="1" fill="#000000"/><rect x="3" y="8" width="1" height="1" fill="#000000"/><rect x="4" y="9" width="1" height="1" fill="#000000"/><rect x="5" y="10" width="1" height="1" fill="#000000"/><rect x="6" y="9" width="1" height="1" fill="#000000"/><rect x="7" y="8" width="1" height="1" fill="#000000"/><rect x="8" y="7" width="1" height="1" fill="#000000"/><rect x="9" y="6" width="1" height="1" fill="#000000"/><rect x="10" y="5" width="1" height="1" fill="#ffffff"/><rect x="3" y="4" width="1" height="1" fill="#d6d6d6"/><rect x="4" y="3" width="1" height="1" fill="#d6d6d6"/><rect x="5" y="2" width="1" height="1" fill="#d6d6d6"/><rect x="6" y="3" width="1" height="1" fill="#d6d6d6"/><rect x="7" y="4" width="1" height="1" fill="#d6d6d6"/><rect x="2" y="4" width="1" height="1" fill="#ffffff"/><rect x="3" y="3" width="1" height="1" fill="#ffffff"/><rect x="4" y="2" width="1" height="1" fill="#ffffff"/><rect x="5" y="1" width="1" height="1" fill="#ffffff"/><rect x="6" y="2" width="1" height="1" fill="#ffffff"/><rect x="7" y="3" width="1" height="1" fill="#ffffff"/><rect x="8" y="4" width="1" height="1" fill="#ffffff"/><rect x="1" y="4" width="1" height="1" fill="#ffffff"/><rect x="2" y="3" width="1" height="1" fill="#ffffff"/><rect x="3" y="2" width="1" height="1" fill="#ffffff"/><rect x="4" y="1" width="1" height="1" fill="#ffffff"/><rect x="5" y="0" width="1" height="1" fill="#ffffff"/><rect x="6" y="1" width="1" height="1" fill="#ffffff"/><rect x="7" y="2" width="1" height="1" fill="#ffffff"/><rect x="8" y="3" width="1" height="1" fill="#ffffff"/><rect x="9" y="4" width="1" height="1" fill="#ffffff"/></svg>
<div class="t" style="left:321px;top:373px;font-size:12px;line-height:12px;color:#ffffff;"><div style="left:0px;top:0">H</div><div style="left:9px;top:0">o</div><div style="left:16px;top:0">r</div><div style="left:20px;top:0">i</div><div style="left:23px;top:0">z</div><div style="left:30px;top:0">o</div><div style="left:37px;top:0">n</div><div style="left:44px;top:0">t</div><div style="left:47px;top:0">a</div><div style="left:54px;top:0">l</div></div>
<div class="t" style="left:320px;top:372px;font-size:12px;line-height:12px;color:#757575;"><div style="left:0px;top:0">H</div><div style="left:9px;top:0">o</div><div style="left:16px;top:0">r</div><div style="left:20px;top:0">i</div><div style="left:23px;top:0">z</div><div style="left:30px;top:0">o</div><div style="left:37px;top:0">n</div><div style="left:44px;top:0">t</div><div style="left:47px;top:0">a</div><div style="left:54px;top:0">l</div></div>
<div style="left:417px;top:252px;width:211px;height:1px;background:#969696;"></div>
<div style="left:417px;top:252px;width:1px;height:150px;background:#969696;"></div>
<div style="left:418px;top:253px;width:211px;height:1px;background:#ffffff;"></div>
<div style="left:418px;top:253px;width:1px;height:149px;background:#ffffff;"></div>
<div style="left:627px;top:254px;width:1px;height:148px;background:#969696;"></div>
<div style="left:419px;top:401px;width:209px;height:1px;background:#969696;"></div>
<div style="left:628px;top:252px;width:1px;height:151px;background:#ffffff;"></div>
<div style="left:417px;top:402px;width:212px;height:1px;background:#ffffff;"></div>
<div style="left:421px;top:246px;width:59px;height:10px;background:#d6d6d6;"></div>
<div class="t" style="left:423px;top:247px;font-size:12px;line-height:12px;color:#000000;"><div style="left:0px;top:0">W</div><div style="left:11px;top:0">a</div><div style="left:18px;top:0">l</div><div style="left:21px;top:0">l</div><div style="left:24px;top:0">p</div><div style="left:31px;top:0">a</div><div style="left:38px;top:0">p</div><div style="left:45px;top:0">e</div><div style="left:52px;top:0">r</div></div>
<div style="left:428px;top:270px;width:118px;height:1px;background:#ffffff;"></div>
<div style="left:428px;top:270px;width:1px;height:26px;background:#ffffff;"></div>
<div style="left:429px;top:294px;width:116px;height:1px;background:#969696;"></div>
<div style="left:544px;top:271px;width:1px;height:24px;background:#969696;"></div>
<div style="left:428px;top:295px;width:118px;height:1px;background:#000000;"></div>
<div style="left:545px;top:270px;width:1px;height:26px;background:#000000;"></div>
<div class="t" style="left:435px;top:276px;font-size:12px;line-height:12px;color:#000000;"><div style="left:0px;top:0">n</div><div style="left:7px;top:0">o</div><div style="left:15px;top:0">n</div><div style="left:22px;top:0">e</div></div>
<div style="left:525px;top:279px;width:12px;height:1px;background:#ffffff;"></div>
<div style="left:525px;top:279px;width:1px;height:8px;background:#ffffff;"></div>
<div style="left:526px;top:285px;width:10px;height:1px;background:#969696;"></div>
<div style="left:535px;top:280px;width:1px;height:6px;background:#969696;"></div>
<div style="left:525px;top:286px;width:12px;height:1px;background:#000000;"></div>
<div style="left:536px;top:279px;width:1px;height:8px;background:#000000;"></div>
<div style="left:555px;top:269px;width:64px;height:1px;background:#ffffff;"></div>
<div style="left:555px;top:269px;width:1px;height:28px;background:#ffffff;"></div>
<div style="left:556px;top:295px;width:62px;height:1px;background:#969696;"></div>
<div style="left:617px;top:270px;width:1px;height:26px;background:#969696;"></div>
<div style="left:555px;top:296px;width:64px;height:1px;background:#000000;"></div>
<div style="left:618px;top:269px;width:1px;height:28px;background:#000000;"></div>
<div class="t" style="left:561px;top:277px;font-size:12px;line-height:12px;color:#000000;"><div style="left:0px;top:0">B</div><div style="left:8px;top:0">r</div><div style="left:13px;top:0">o</div><div style="left:20px;top:0">w</div><div style="left:29px;top:0">s</div><div style="left:36px;top:0">e</div><div style="left:43px;top:0">.</div><div style="left:47px;top:0">.</div><div style="left:50px;top:0">.</div></div>
<svg style="position:absolute;left:429px;top:304px" width="11" height="11" shape-rendering="crispEdges"><rect x="2" y="5" width="1" height="1" fill="#000000"/><rect x="3" y="6" width="1" height="1" fill="#d6d6d6"/><rect x="4" y="7" width="1" height="1" fill="#d6d6d6"/><rect x="5" y="8" width="1" height="1" fill="#d6d6d6"/><rect x="6" y="7" width="1" height="1" fill="#d6d6d6"/><rect x="7" y="6" width="1" height="1" fill="#d6d6d6"/><rect x="8" y="5" width="1" height="1" fill="#000000"/><rect x="1" y="5" width="1" height="1" fill="#969696"/><rect x="2" y="6" width="1" height="1" fill="#ffffff"/><rect x="3" y="7" width="1" height="1" fill="#ffffff"/><rect x="4" y="8" width="1" height="1" fill="#ffffff"/><rect x="5" y="9" width="1" height="1" fill="#ffffff"/><rect x="6" y="8" width="1" height="1" fill="#ffffff"/><rect x="7" y="7" width="1" height="1" fill="#ffffff"/><rect x="8" y="6" width="1" height="1" fill="#ffffff"/><rect x="9" y="5" width="1" height="1" fill="#969696"/><rect x="0" y="5" width="1" height="1" fill="#969696"/><rect x="1" y="6" width="1" height="1" fill="#ffffff"/><rect x="2" y="7" width="1" height="1" fill="#ffffff"/><rect x="3" y="8" width="1" height="1" fill="#ffffff"/><rect x="4" y="9" width="1" height="1" fill="#ffffff"/><rect x="5" y="10" width="1" height="1" fill="#ffffff"/><rect x="6" y="9" width="1" height="1" fill="#ffffff"/><rect x="7" y="8" width="1" height="1" fill="#ffffff"/><rect x="8" y="7" width="1" height="1" fill="#ffffff"/><rect x="9" y="6" width="1" height="1" fill="#ffffff"/><rect x="10" y="5" width="1" height="1" fill="#969696"/><rect x="3" y="4" width="1" height="1" fill="#000000"/><rect x="4" y="3" width="1" height="1" fill="#000000"/><rect x="5" y="2" width="1" height="1" fill="#000000"/><rect x="6" y="3" width="1" height="1" fill="#000000"/><rect x="7" y="4" width="1" height="1" fill="#000000"/><rect x="2" y="4" width="1" height="1" fill="#969696"/><rect x="3" y="3" width="1" height="1" fill="#969696"/><rect x="4" y="2" width="1" height="1" fill="#969696"/><rect x="5" y="1" width="1" height="1" fill="#969696"/><rect x="6" y="2" width="1" height="1" fill="#969696"/><rect x="7" y="3" width="1" height="1" fill="#969696"/><rect x="8" y="4" width="1" height="1" fill="#969696"/><rect x="1" y="4" width="1" height="1" fill="#969696"/><rect x="2" y="3" width="1" height="1" fill="#969696"/><rect x="3" y="2" width="1" height="1" fill="#969696"/><rect x="4" y="1" width="1" height="1" fill="#969696"/><rect x="5" y="0" width="1" height="1" fill="#969696"/><rect x="6" y="1" width="1" height="1" fill="#969696"/><rect x="7" y="2" width="1" height="1" fill="#969696"/><rect x="8" y="3" width="1" height="1" fill="#969696"/><rect x="9" y="4" width="1" height="1" fill="#969696"/></svg>
<div class="t" style="left:444px;top:303px;font-size:12px;line-height:12px;color:#000000;"><div style="left:0px;top:0">T</div><div style="left:7px;top:0">i</div><div style="left:10px;top:0">l</div><div style="left:14px;top:0">e</div><div style="left:21px;top:0">d</div></div>
<svg style="position:absolute;left:429px;top:328px" width="11" height="11" shape-rendering="crispEdges"><rect x="2" y="5" width="1" height="1" fill="#d6d6d6"/><rect x="3" y="6" width="1" height="1" fill="#969696"/><rect x="4" y="7" width="1" height="1" fill="#969696"/><rect x="5" y="8" width="1" height="1" fill="#969696"/><rect x="6" y="7" width="1" height="1" fill="#969696"/><rect x="7" y="6" width="1" height="1" fill="#969696"/><rect x="8" y="5" width="1" height="1" fill="#d6d6d6"/><rect x="1" y="5" width="1" height="1" fill="#ffffff"/><rect x="2" y="6" width="1" height="1" fill="#969696"/><rect x="3" y="7" width="1" height="1" fill="#969696"/><rect x="4" y="8" width="1" height="1" fill="#969696"/><rect x="5" y="9" width="1" height="1" fill="#969696"/><rect x="6" y="8" width="1" height="1" fill="#969696"/><rect x="7" y="7" width="1" height="1" fill="#969696"/><rect x="8" y="6" width="1" height="1" fill="#969696"/><rect x="9" y="5" width="1" height="1" fill="#ffffff"/><rect x="0" y="5" width="1" height="1" fill="#ffffff"/><rect x="1" y="6" width="1" height="1" fill="#000000"/><rect x="2" y="7" width="1" height="1" fill="#000000"/><rect x="3" y="8" width="1" height="1" fill="#000000"/><rect x="4" y="9" width="1" height="1" fill="#000000"/><rect x="5" y="10" width="1" height="1" fill="#000000"/><rect x="6" y="9" width="1" height="1" fill="#000000"/><rect x="7" y="8" width="1" height="1" fill="#000000"/><rect x="8" y="7" width="1" height="1" fill="#000000"/><rect x="9" y="6" width="1" height="1" fill="#000000"/><rect x="10" y="5" width="1" height="1" fill="#ffffff"/><rect x="3" y="4" width="1" height="1" fill="#d6d6d6"/><rect x="4" y="3" width="1" height="1" fill="#d6d6d6"/><rect x="5" y="2" width="1" height="1" fill="#d6d6d6"/><rect x="6" y="3" width="1" height="1" fill="#d6d6d6"/><rect x="7" y="4" width="1" height="1" fill="#d6d6d6"/><rect x="2" y="4" width="1" height="1" fill="#ffffff"/><rect x="3" y="3" width="1" height="1" fill="#ffffff"/><rect x="4" y="2" width="1" height="1" fill="#ffffff"/><rect x="5" y="1" width="1" height="1" fill="#ffffff"/><rect x="6" y="2" width="1" height="1" fill="#ffffff"/><rect x="7" y="3" width="1" height="1" fill="#ffffff"/><rect x="8" y="4" width="1" height="1" fill="#ffffff"/><rect x="1" y="4" width="1" height="1" fill="#ffffff"/><rect x="2" y="3" width="1" height="1" fill="#ffffff"/><rect x="3" y="2" width="1" height="1" fill="#ffffff"/><rect x="4" y="1" width="1" height="1" fill="#ffffff"/><rect x="5" y="0" width="1" height="1" fill="#ffffff"/><rect x="6" y="1" width="1" height="1" fill="#ffffff"/><rect x="7" y="2" width="1" height="1" fill="#ffffff"/><rect x="8" y="3" width="1" height="1" fill="#ffffff"/><rect x="9" y="4" width="1" height="1" fill="#ffffff"/></svg>
<div class="t" style="left:444px;top:327px;font-size:12px;line-height:12px;color:#000000;"><div style="left:0px;top:0">C</div><div style="left:9px;top:0">e</div><div style="left:16px;top:0">n</div><div style="left:23px;top:0">t</div><div style="left:27px;top:0">e</div><div style="left:34px;top:0">r</div><div style="left:38px;top:0">e</div><div style="left:45px;top:0">d</div></div>
<svg style="position:absolute;left:429px;top:352px" width="11" height="11" shape-rendering="crispEdges"><rect x="2" y="5" width="1" height="1" fill="#d6d6d6"/><rect x="3" y="6" width="1" height="1" fill="#969696"/><rect x="4" y="7" width="1" height="1" fill="#969696"/><rect x="5" y="8" width="1" height="1" fill="#969696"/><rect x="6" y="7" width="1" height="1" fill="#969696"/><rect x="7" y="6" width="1" height="1" fill="#969696"/><rect x="8" y="5" width="1" height="1" fill="#d6d6d6"/><rect x="1" y="5" width="1" height="1" fill="#ffffff"/><rect x="2" y="6" width="1" height="1" fill="#969696"/><rect x="3" y="7" width="1" height="1" fill="#969696"/><rect x="4" y="8" width="1" height="1" fill="#969696"/><rect x="5" y="9" width="1" height="1" fill="#969696"/><rect x="6" y="8" width="1" height="1" fill="#969696"/><rect x="7" y="7" width="1" height="1" fill="#969696"/><rect x="8" y="6" width="1" height="1" fill="#969696"/><rect x="9" y="5" width="1" height="1" fill="#ffffff"/><rect x="0" y="5" width="1" height="1" fill="#ffffff"/><rect x="1" y="6" width="1" height="1" fill="#000000"/><rect x="2" y="7" width="1" height="1" fill="#000000"/><rect x="3" y="8" width="1" height="1" fill="#000000"/><rect x="4" y="9" width="1" height="1" fill="#000000"/><rect x="5" y="10" width="1" height="1" fill="#000000"/><rect x="6" y="9" width="1" height="1" fill="#000000"/><rect x="7" y="8" width="1" height="1" fill="#000000"/><rect x="8" y="7" width="1" height="1" fill="#000000"/><rect x="9" y="6" width="1" height="1" fill="#000000"/><rect x="10" y="5" width="1" height="1" fill="#ffffff"/><rect x="3" y="4" width="1" height="1" fill="#d6d6d6"/><rect x="4" y="3" width="1" height="1" fill="#d6d6d6"/><rect x="5" y="2" width="1" height="1" fill="#d6d6d6"/><rect x="6" y="3" width="1" height="1" fill="#d6d6d6"/><rect x="7" y="4" width="1" height="1" fill="#d6d6d6"/><rect x="2" y="4" width="1" height="1" fill="#ffffff"/><rect x="3" y="3" width="1" height="1" fill="#ffffff"/><rect x="4" y="2" width="1" height="1" fill="#ffffff"/><rect x="5" y="1" width="1" height="1" fill="#ffffff"/><rect x="6" y="2" width="1" height="1" fill="#ffffff"/><rect x="7" y="3" width="1" height="1" fill="#ffffff"/><rect x="8" y="4" width="1" height="1" fill="#ffffff"/><rect x="1" y="4" width="1" height="1" fill="#ffffff"/><rect x="2" y="3" width="1" height="1" fill="#ffffff"/><rect x="3" y="2" width="1" height="1" fill="#ffffff"/><rect x="4" y="1" width="1" height="1" fill="#ffffff"/><rect x="5" y="0" width="1" height="1" fill="#ffffff"/><rect x="6" y="1" width="1" height="1" fill="#ffffff"/><rect x="7" y="2" width="1" height="1" fill="#ffffff"/><rect x="8" y="3" width="1" height="1" fill="#ffffff"/><rect x="9" y="4" width="1" height="1" fill="#ffffff"/></svg>
<div class="t" style="left:444px;top:351px;font-size:12px;line-height:12px;color:#000000;"><div style="left:0px;top:0">S</div><div style="left:8px;top:0">c</div><div style="left:14px;top:0">a</div><div style="left:22px;top:0">l</div><div style="left:25px;top:0">e</div><div style="left:32px;top:0">d</div><div style="left:43px;top:0">(</div><div style="left:48px;top:0">k</div><div style="left:54px;top:0">e</div><div style="left:61px;top:0">e</div><div style="left:68px;top:0">p</div><div style="left:80px;top:0">a</div><div style="left:87px;top:0">s</div><div style="left:93px;top:0">p</div><div style="left:100px;top:0">e</div><div style="left:108px;top:0">c</div><div style="left:114px;top:0">t</div><div style="left:117px;top:0">)</div></div>
<svg style="position:absolute;left:429px;top:376px" width="11" height="11" shape-rendering="crispEdges"><rect x="2" y="5" width="1" height="1" fill="#d6d6d6"/><rect x="3" y="6" width="1" height="1" fill="#969696"/><rect x="4" y="7" width="1" height="1" fill="#969696"/><rect x="5" y="8" width="1" height="1" fill="#969696"/><rect x="6" y="7" width="1" height="1" fill="#969696"/><rect x="7" y="6" width="1" height="1" fill="#969696"/><rect x="8" y="5" width="1" height="1" fill="#d6d6d6"/><rect x="1" y="5" width="1" height="1" fill="#ffffff"/><rect x="2" y="6" width="1" height="1" fill="#969696"/><rect x="3" y="7" width="1" height="1" fill="#969696"/><rect x="4" y="8" width="1" height="1" fill="#969696"/><rect x="5" y="9" width="1" height="1" fill="#969696"/><rect x="6" y="8" width="1" height="1" fill="#969696"/><rect x="7" y="7" width="1" height="1" fill="#969696"/><rect x="8" y="6" width="1" height="1" fill="#969696"/><rect x="9" y="5" width="1" height="1" fill="#ffffff"/><rect x="0" y="5" width="1" height="1" fill="#ffffff"/><rect x="1" y="6" width="1" height="1" fill="#000000"/><rect x="2" y="7" width="1" height="1" fill="#000000"/><rect x="3" y="8" width="1" height="1" fill="#000000"/><rect x="4" y="9" width="1" height="1" fill="#000000"/><rect x="5" y="10" width="1" height="1" fill="#000000"/><rect x="6" y="9" width="1" height="1" fill="#000000"/><rect x="7" y="8" width="1" height="1" fill="#000000"/><rect x="8" y="7" width="1" height="1" fill="#000000"/><rect x="9" y="6" width="1" height="1" fill="#000000"/><rect x="10" y="5" width="1" height="1" fill="#ffffff"/><rect x="3" y="4" width="1" height="1" fill="#d6d6d6"/><rect x="4" y="3" width="1" height="1" fill="#d6d6d6"/><rect x="5" y="2" width="1" height="1" fill="#d6d6d6"/><rect x="6" y="3" width="1" height="1" fill="#d6d6d6"/><rect x="7" y="4" width="1" height="1" fill="#d6d6d6"/><rect x="2" y="4" width="1" height="1" fill="#ffffff"/><rect x="3" y="3" width="1" height="1" fill="#ffffff"/><rect x="4" y="2" width="1" height="1" fill="#ffffff"/><rect x="5" y="1" width="1" height="1" fill="#ffffff"/><rect x="6" y="2" width="1" height="1" fill="#ffffff"/><rect x="7" y="3" width="1" height="1" fill="#ffffff"/><rect x="8" y="4" width="1" height="1" fill="#ffffff"/><rect x="1" y="4" width="1" height="1" fill="#ffffff"/><rect x="2" y="3" width="1" height="1" fill="#ffffff"/><rect x="3" y="2" width="1" height="1" fill="#ffffff"/><rect x="4" y="1" width="1" height="1" fill="#ffffff"/><rect x="5" y="0" width="1" height="1" fill="#ffffff"/><rect x="6" y="1" width="1" height="1" fill="#ffffff"/><rect x="7" y="2" width="1" height="1" fill="#ffffff"/><rect x="8" y="3" width="1" height="1" fill="#ffffff"/><rect x="9" y="4" width="1" height="1" fill="#ffffff"/></svg>
<div class="t" style="left:444px;top:375px;font-size:12px;line-height:12px;color:#000000;"><div style="left:0px;top:0">S</div><div style="left:9px;top:0">c</div><div style="left:15px;top:0">a</div><div style="left:23px;top:0">l</div><div style="left:26px;top:0">e</div><div style="left:34px;top:0">d</div></div>
<div style="left:229px;top:419px;width:10px;height:1px;background:#ffffff;"></div>
<div style="left:229px;top:419px;width:1px;height:10px;background:#ffffff;"></div>
<div style="left:230px;top:427px;width:8px;height:1px;background:#969696;"></div>
<div style="left:237px;top:420px;width:1px;height:8px;background:#969696;"></div>
<div style="left:229px;top:428px;width:10px;height:1px;background:#000000;"></div>
<div style="left:238px;top:419px;width:1px;height:10px;background:#000000;"></div>
<div class="t" style="left:243px;top:417px;font-size:12px;line-height:12px;color:#000000;"><div style="left:0px;top:0">D</div><div style="left:9px;top:0">i</div><div style="left:12px;top:0">s</div><div style="left:18px;top:0">a</div><div style="left:25px;top:0">b</div><div style="left:33px;top:0">l</div><div style="left:36px;top:0">e</div><div style="left:47px;top:0">b</div><div style="left:54px;top:0">a</div><div style="left:61px;top:0">c</div><div style="left:67px;top:0">k</div><div style="left:73px;top:0">g</div><div style="left:80px;top:0">r</div><div style="left:85px;top:0">o</div><div style="left:92px;top:0">u</div><div style="left:99px;top:0">n</div><div style="left:106px;top:0">d</div><div style="left:117px;top:0">s</div><div style="left:123px;top:0">e</div><div style="left:130px;top:0">l</div><div style="left:133px;top:0">e</div><div style="left:141px;top:0">c</div><div style="left:147px;top:0">t</div><div style="left:150px;top:0">i</div><div style="left:153px;top:0">o</div><div style="left:160px;top:0">n</div></div>
<div style="left:244px;top:482px;width:59px;height:1px;background:#e6e6e6;"></div>
<div style="left:302px;top:457px;width:1px;height:26px;background:#e6e6e6;"></div>
<div style="left:245px;top:481px;width:57px;height:1px;background:#505050;"></div>
<div style="left:301px;top:457px;width:1px;height:25px;background:#505050;"></div>
<div style="left:243px;top:456px;width:60px;height:1px;background:#000000;"></div>
<div style="left:243px;top:456px;width:1px;height:27px;background:#000000;"></div>
<div style="left:244px;top:457px;width:57px;height:1px;background:#000000;"></div>
<div style="left:244px;top:457px;width:1px;height:24px;background:#000000;"></div>
<div style="left:243px;top:456px;width:1px;height:1px;background:#e6e6e6;"></div>
<div style="left:244px;top:457px;width:1px;height:1px;background:#ffffff;"></div>
<div style="left:244px;top:481px;width:1px;height:1px;background:#e6e6e6;"></div>
<div class="t" style="left:265px;top:465px;font-size:12px;line-height:12px;color:#ffffff;"><div style="left:0px;top:0">T</div><div style="left:7px;top:0">r</div><div style="left:12px;top:0">y</div></div>
<div class="t" style="left:264px;top:464px;font-size:12px;line-height:12px;color:#757575;"><div style="left:0px;top:0">T</div><div style="left:7px;top:0">r</div><div style="left:12px;top:0">y</div></div>
<div style="left:322px;top:482px;width:59px;height:1px;background:#e6e6e6;"></div>
<div style="left:380px;top:457px;width:1px;height:26px;background:#e6e6e6;"></div>
<div style="left:323px;top:481px;width:57px;height:1px;background:#505050;"></div>
<div style="left:379px;top:457px;width:1px;height:25px;background:#505050;"></div>
<div style="left:321px;top:456px;width:60px;height:1px;background:#000000;"></div>
<div style="left:321px;top:456px;width:1px;height:27px;background:#000000;"></div>
<div style="left:322px;top:457px;width:57px;height:1px;background:#000000;"></div>
<div style="left:322px;top:457px;width:1px;height:24px;background:#000000;"></div>
<div style="left:321px;top:456px;width:1px;height:1px;background:#e6e6e6;"></div>
<div style="left:322px;top:457px;width:1px;height:1px;background:#ffffff;"></div>
<div style="left:322px;top:481px;width:1px;height:1px;background:#e6e6e6;"></div>
<div class="t" style="left:334px;top:465px;font-size:12px;line-height:12px;color:#ffffff;"><div style="left:0px;top:0">R</div><div style="left:9px;top:0">e</div><div style="left:16px;top:0">v</div><div style="left:23px;top:0">e</div><div style="left:30px;top:0">r</div><div style="left:34px;top:0">t</div></div>
<div class="t" style="left:333px;top:464px;font-size:12px;line-height:12px;color:#757575;"><div style="left:0px;top:0">R</div><div style="left:9px;top:0">e</div><div style="left:16px;top:0">v</div><div style="left:23px;top:0">e</div><div style="left:30px;top:0">r</div><div style="left:34px;top:0">t</div></div>
<div style="left:400px;top:482px;width:59px;height:1px;background:#e6e6e6;"></div>
<div style="left:458px;top:457px;width:1px;height:26px;background:#e6e6e6;"></div>
<div style="left:401px;top:481px;width:57px;height:1px;background:#505050;"></div>
<div style="left:457px;top:457px;width:1px;height:25px;background:#505050;"></div>
<div style="left:399px;top:456px;width:60px;height:1px;background:#000000;"></div>
<div style="left:399px;top:456px;width:1px;height:27px;background:#000000;"></div>
<div style="left:400px;top:457px;width:57px;height:1px;background:#000000;"></div>
<div style="left:400px;top:457px;width:1px;height:24px;background:#000000;"></div>
<div style="left:399px;top:456px;width:1px;height:1px;background:#e6e6e6;"></div>
<div style="left:400px;top:457px;width:1px;height:1px;background:#ffffff;"></div>
<div style="left:400px;top:481px;width:1px;height:1px;background:#e6e6e6;"></div>
<div class="t" style="left:421px;top:465px;font-size:12px;line-height:12px;color:#ffffff;"><div style="left:0px;top:0">O</div><div style="left:10px;top:0">K</div></div>
<div class="t" style="left:420px;top:464px;font-size:12px;line-height:12px;color:#757575;"><div style="left:0px;top:0">O</div><div style="left:10px;top:0">K</div></div>
<div style="left:477px;top:456px;width:60px;height:1px;background:#ffffff;"></div>
<div style="left:477px;top:456px;width:1px;height:27px;background:#ffffff;"></div>
<div style="left:478px;top:481px;width:58px;height:1px;background:#969696;"></div>
<div style="left:535px;top:457px;width:1px;height:25px;background:#969696;"></div>
<div style="left:477px;top:482px;width:60px;height:1px;background:#000000;"></div>
<div style="left:536px;top:456px;width:1px;height:27px;background:#000000;"></div>
<div class="t" style="left:487px;top:464px;font-size:12px;line-height:12px;color:#000000;"><div style="left:0px;top:0">C</div><div style="left:9px;top:0">a</div><div style="left:17px;top:0">n</div><div style="left:24px;top:0">c</div><div style="left:31px;top:0">e</div><div style="left:38px;top:0">l</div></div>
<div style="left:556px;top:482px;width:59px;height:1px;background:#e6e6e6;"></div>
<div style="left:614px;top:457px;width:1px;height:26px;background:#e6e6e6;"></div>
<div style="left:557px;top:481px;width:57px;height:1px;background:#505050;"></div>
<div style="left:613px;top:457px;width:1px;height:25px;background:#505050;"></div>
<div style="left:555px;top:456px;width:60px;height:1px;background:#000000;"></div>
<div style="left:555px;top:456px;width:1px;height:27px;background:#000000;"></div>
<div style="left:556px;top:457px;width:57px;height:1px;background:#000000;"></div>
<div style="left:556px;top:457px;width:1px;height:24px;background:#000000;"></div>
<div style="left:555px;top:456px;width:1px;height:1px;background:#e6e6e6;"></div>
<div style="left:556px;top:457px;width:1px;height:1px;background:#ffffff;"></div>
<div style="left:556px;top:481px;width:1px;height:1px;background:#e6e6e6;"></div>
<div class="t" style="left:572px;top:464px;font-size:12px;line-height:12px;color:#000000;"><div style="left:0px;top:0">H</div><div style="left:9px;top:0">e</div><div style="left:17px;top:0">l</div><div style="left:20px;top:0">p</div></div>
<div style="left:6px;top:511px;width:641px;height:1px;background:#ffffff;"></div>
<div style="left:646px;top:492px;width:1px;height:20px;background:#ffffff;"></div>
<div style="left:7px;top:510px;width:639px;height:1px;background:#d6d6d6;"></div>
<div style="left:645px;top:493px;width:1px;height:18px;background:#d6d6d6;"></div>
<div style="left:6px;top:492px;width:641px;height:1px;background:#969696;"></div>
<div style="left:6px;top:492px;width:1px;height:20px;background:#969696;"></div>
<div style="left:7px;top:493px;width:639px;height:1px;background:#000000;"></div>
<div style="left:7px;top:493px;width:1px;height:18px;background:#000000;"></div>
<div class="t" style="left:8px;top:496px;font-size:12px;line-height:12px;color:#000000;"><div style="left:0px;top:0">C</div><div style="left:9px;top:0">o</div><div style="left:16px;top:0">n</div><div style="left:23px;top:0">f</div><div style="left:26px;top:0">i</div><div style="left:29px;top:0">g</div><div style="left:36px;top:0">u</div><div style="left:43px;top:0">r</div><div style="left:47px;top:0">a</div><div style="left:54px;top:0">t</div><div style="left:57px;top:0">i</div><div style="left:61px;top:0">o</div><div style="left:68px;top:0">n</div><div style="left:79px;top:0">o</div><div style="left:86px;top:0">f</div><div style="left:93px;top:0">t</div><div style="left:96px;top:0">h</div><div style="left:103px;top:0">e</div><div style="left:114px;top:0">d</div><div style="left:121px;top:0">e</div><div style="left:128px;top:0">s</div><div style="left:134px;top:0">k</div><div style="left:140px;top:0">t</div><div style="left:143px;top:0">o</div><div style="left:150px;top:0">p</div><div style="left:157px;top:0">’</div><div style="left:160px;top:0">s</div><div style="left:171px;top:0">b</div><div style="left:178px;top:0">a</div><div style="left:185px;top:0">c</div><div style="left:191px;top:0">k</div><div style="left:197px;top:0">g</div><div style="left:204px;top:0">r</div><div style="left:208px;top:0">o</div><div style="left:215px;top:0">u</div><div style="left:222px;top:0">n</div><div style="left:229px;top:0">d</div></div>
</body></html>
